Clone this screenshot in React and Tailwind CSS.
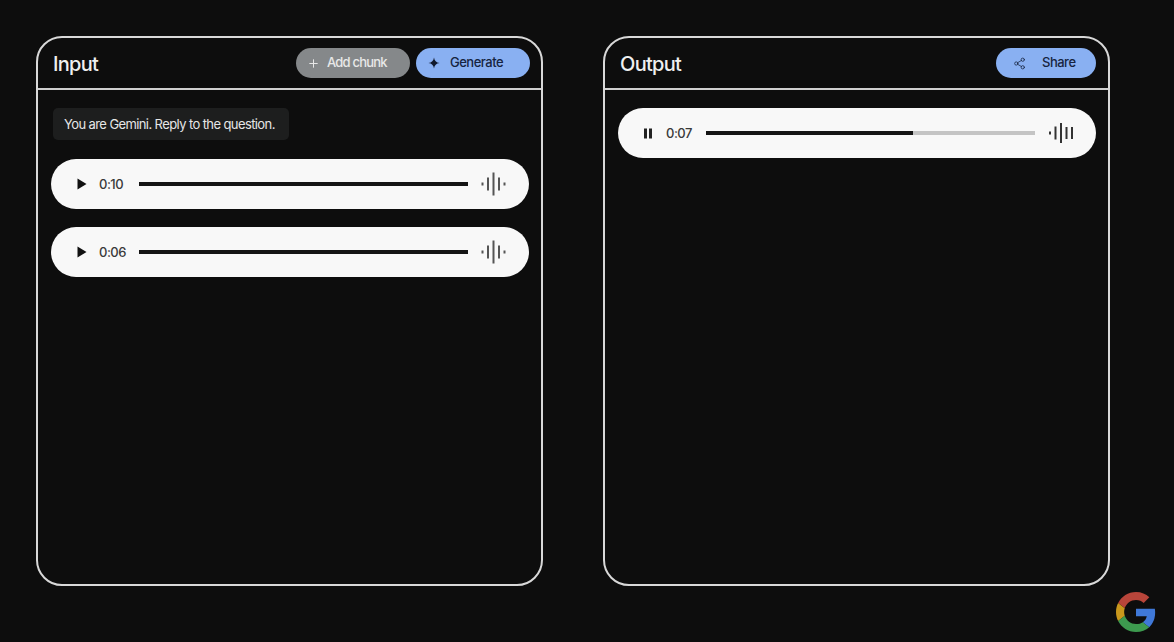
import { Plus, Share2 } from "lucide-react";

const font = { fontFamily: '"Inter", "Open Sans", sans-serif' };

function PlayIcon() {
  return (
    <svg width="10" height="12" viewBox="0 0 10 12" className="shrink-0">
      <path d="M0.5 0.5 L9.5 6 L0.5 11.5 Z" fill="#111" />
    </svg>
  );
}

function PauseIcon() {
  return (
    <svg width="10" height="11" viewBox="0 0 10 11" className="shrink-0">
      <rect x="0" y="0.5" width="3" height="10" fill="#222" />
      <rect x="5" y="0.5" width="3" height="10" fill="#222" />
    </svg>
  );
}

function WaveIcon() {
  const bars = [
    [1.5, 3],
    [7, 13],
    [12.5, 23],
    [18, 13],
    [23.5, 3],
  ];
  return (
    <svg width="26" height="24" viewBox="0 0 26 24" className="shrink-0">
      {bars.map(([x, h]) => (
        <rect key={x} x={x - 1} y={12 - h / 2} width="2" height={h} fill="#555" />
      ))}
    </svg>
  );
}

function OutputWaveIcon() {
  const bars = [
    [1, 3],
    [6.5, 13],
    [12, 20],
    [17.5, 12],
    [23, 12],
  ];
  return (
    <svg width="25" height="24" viewBox="0 0 25 24" className="shrink-0">
      {bars.map(([x, h]) => (
        <rect key={x} x={x - 1} y={12 - h / 2} width="2" height={h} fill="#333" />
      ))}
    </svg>
  );
}

function AudioPill({ time, progress = 100, playing = false }) {
  return (
    <div className="flex h-[50px] w-[478px] items-center rounded-full bg-[#f8f8f8] pl-[24px] pr-[22px]">
      <div className="flex w-[14px] justify-center">{playing ? <PauseIcon /> : <PlayIcon />}</div>
      <span className="ml-[10px] w-[40px] pt-[1px] text-[13px] font-medium tracking-[-0.5px] text-[#3a3a3a]">{time}</span>
      <div className="h-[4px] w-[329px] bg-[#c4c4c4]">
        <div className="h-full bg-[#141414]" style={{ width: `${progress}%` }} />
      </div>
      <div className="ml-auto flex">{playing ? <OutputWaveIcon /> : <WaveIcon />}</div>
    </div>
  );
}

function GoogleLogo() {
  return (
    <svg viewBox="0 0 48 48" className="absolute left-[1116px] top-[592px] h-[40px] w-[40px]">
      <path fill="#b8453a" d="M24 9.5c3.9 0 6.9 1.5 9.2 3.6l6.8-6.8C35.9 2.5 30.5 0 24 0 14.6 0 6.5 5.4 2.6 13.2l7.9 6.1C12.4 13.7 17.7 9.5 24 9.5z" />
      <path fill="#3f78d8" d="M46.98 24.55c0-1.57-.15-3.09-.38-4.55H24v9.02h12.94c-.58 2.96-2.26 5.48-4.78 7.18l7.73 6c4.51-4.18 7.09-10.36 7.09-17.65z" />
      <path fill="#c9971c" d="M10.53 28.59c-.48-1.45-.76-2.99-.76-4.59s.27-3.14.76-4.59l-7.98-6.19C.92 16.46 0 20.12 0 24c0 3.88.92 7.54 2.56 10.78l7.97-6.19z" />
      <path fill="#3d9a4f" d="M24 48c6.48 0 11.93-2.13 15.89-5.81l-7.73-6c-2.15 1.45-4.92 2.3-8.16 2.3-6.26 0-11.57-4.22-13.47-9.91l-7.98 6.19C6.51 42.62 14.62 48 24 48z" />
    </svg>
  );
}

function Panel({ title, actions, children }) {
  return (
    <section className="flex h-[550px] w-[507px] flex-col rounded-[26px] border-2 border-[#d8d8d8] bg-[#0d0d0d]">
      <header className="flex h-[52px] shrink-0 items-center justify-between border-b-2 border-[#cfcfcf] pl-[15px] pr-[11px]">
        <h2 className="pt-[2px] text-[20px] font-medium tracking-[-0.7px] text-[#f0f0f0]">{title}</h2>
        <div className="flex gap-[6px]">{actions}</div>
      </header>
      {children}
    </section>
  );
}

export default function App() {
  return (
    <div className="relative h-[642px] w-[1174px] overflow-hidden bg-[#0d0d0d] pl-[36px] pt-[36px]" style={font}>
      <div className="flex gap-[60px]">
        <Panel
          title="Input"
          actions={
            <>
              <button className="flex h-[30px] w-[114px] items-center rounded-full bg-[#85888a] pl-[11px] text-[13px] font-medium tracking-[-0.8px] text-[#e8e8e8]">
                <Plus size={13} strokeWidth={1.8} className="mr-[7px]" />
                Add chunk
              </button>
              <button className="flex h-[30px] w-[114px] items-center rounded-full bg-[#89b0f2] pl-[12px] text-[13px] font-medium tracking-[-0.5px] text-[#16243f]">
                <svg width="12" height="12" viewBox="0 0 12 12" className="mr-[10px]">
                  <path d="M6 0.5 C6.5 3.8 8.2 5.5 11.5 6 C8.2 6.5 6.5 8.2 6 11.5 C5.5 8.2 3.8 6.5 0.5 6 C3.8 5.5 5.5 3.8 6 0.5 Z" fill="#10192c" />
                </svg>
                Generate
              </button>
            </>
          }
        >
          <div className="flex flex-col items-start gap-[19px] pl-[13px] pt-[18px]">
            <div className="ml-[2px] flex h-[32px] w-[236px] items-center rounded-[5px] bg-[#1d1e1e] pl-[11px] pt-[1px] text-[13px] tracking-[-0.6px] text-[#e6e6e6]">
              You are Gemini. Reply to the question.
            </div>
            <div className="flex flex-col gap-[18px]">
              <AudioPill time="0:10" />
              <AudioPill time="0:06" />
            </div>
          </div>
        </Panel>
        <Panel
          title="Output"
          actions={
            <button className="mr-[1px] flex h-[30px] w-[100px] items-center rounded-full bg-[#89b0f2] pl-[17px] text-[13px] font-medium tracking-[-0.5px] text-[#16243f]">
              <Share2 size={13} strokeWidth={1.4} className="mr-[16px]" />
              Share
            </button>
          }
        >
          <div className="pl-[13px] pt-[18px]">
            <AudioPill time="0:07" progress={63} playing />
          </div>
        </Panel>
      </div>
      <GoogleLogo />
    </div>
  );
}
